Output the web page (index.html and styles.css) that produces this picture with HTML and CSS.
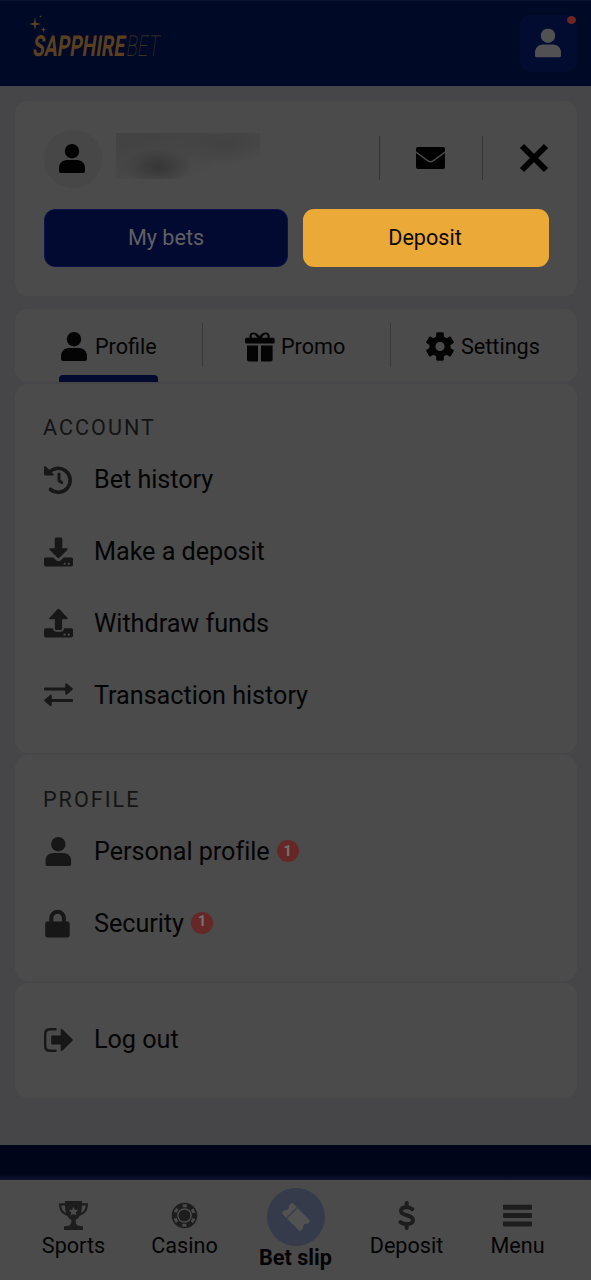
FILE: index.html
```
<!DOCTYPE html>
<html lang="en">
<head>
<meta charset="utf-8">
<title>SapphireBet – Account</title>
<link rel="stylesheet" href="styles.css">
</head>
<body>
<svg class="defs" width="0" height="0">
  <symbol id="user" viewBox="0 0 26 29"><circle cx="13" cy="7.2" r="7.2"/><path d="M8 16h10c4.800 0 8 3.500 8 8.500v2.200c0 1.400-.9 2.300-2.300 2.300H2.300C.9 29 0 28.100 0 26.700v-2.200C0 19.500 3.200 16 8 16z"/></symbol>
  <symbol id="tray" viewBox="0 0 29 10"><path fill-rule="evenodd" d="M1.800 0h7.200l3.400 3.200q2.100 1.600 4.200 0L20 0h7.200Q29 0 29 1.800v5.700Q29 9.300 27.200 9.300H1.800Q0 9.300 0 7.500V1.800Q0 0 1.800 0zM20.600 5.400a1.100 1.100 0 1 0 0 2.200a1.100 1.100 0 1 0 0-2.200zM24.800 5.400a1.100 1.100 0 1 0 0 2.200a1.100 1.100 0 1 0 0-2.200z"/></symbol>
</svg>

<header class="header">
  <div class="logo">
    <svg class="logo-stars" width="18" height="18" viewBox="0 0 18 18"><path d="M6 2l1 5.700 5 1.300-5 1.200-1 5-1-5L0 9l5-1.300zM14.500 11.500l.6 2.600 2.400.6-2.400.6-.6 2.600-.6-2.600-2.400-.6 2.400-.6zM11.500.5l1 1-1 1-1-1z"/></svg>
    <svg class="logo-word" width="134" height="30" viewBox="0 0 134 30"><g transform="translate(3 25.600) skewX(-8)"><text class="word-bold" x="0" y="0" textLength="92" lengthAdjust="spacingAndGlyphs">SAPPHIRE</text><text class="word-thin" x="93.500" y="0" textLength="33" lengthAdjust="spacingAndGlyphs">BET</text></g></svg>
  </div>
  <div class="account-button">
    <svg width="26" height="30" viewBox="0 0 26 29"><use href="#user"/></svg>
    <span class="alert-dot"></span>
  </div>
</header>

<main class="page">
  <section class="card summary">
    <div class="summary-top">
      <div class="avatar"><svg width="26" height="29"><use href="#user"/></svg></div>
      <div class="masked"></div>
      <div class="mail"><svg width="29" height="22" viewBox="0 0 29 22"><path d="M2 0h25q2 0 2 2v2.200L16.700 13.200q-2.200 1.500-4.400 0L0 4.200V2Q0 0 2 0zM0 6l11.500 8.400q3 2 6 0L29 6v14q0 2-2 2H2q-2 0-2-2z"/></svg></div>
      <div class="close"><svg width="30" height="30" viewBox="0 0 30 30"><path d="M3 3l24 24M27 3L3 27"/></svg></div>
    </div>
    <div class="summary-actions">
      <div class="button button-bets">My bets</div>
      <div class="button button-deposit">Deposit</div>
    </div>
  </section>

  <nav class="card tabs">
    <div class="tab tab-profile"><svg width="26" height="29"><use href="#user"/></svg><span>Profile</span></div>
    <div class="tab tab-promo"><svg width="30" height="30" viewBox="0 0 30 30"><path fill-rule="evenodd" d="M2 5.800h2.600C3.800 2.400 5.600.4 8.300.4c2.800 0 4.600 1.500 6.200 3.600C16.200 1.900 18 .4 20.800.4c2.700 0 4.500 2 3.700 5.400H28q1.700 0 1.700 1.600v2.500q0 1.600-1.700 1.600H1.700Q0 11.500 0 9.900V7.400Q0 5.800 2 5.800zM7 5.800h5.500C11 3.500 9.800 2.300 8.300 2.300 6.700 2.300 6.400 4 7 5.800zM16.800 5.800h5.400c.6-1.800.2-3.500-1.400-3.500-1.500 0-2.500 1.200-4 3.500zM2 13.400h11V29.500H4q-2 0-2-2zM16 13.400h11.600v14.100q0 2-2 2H16z"/></svg><span>Promo</span></div>
    <div class="tab tab-settings"><svg width="28" height="29" viewBox="-14 -14.500 28 29"><g class="teeth"><rect x="-3.800" y="-14.200" width="7.600" height="28.400" rx="1.400"/><rect x="-3.800" y="-14.200" width="7.600" height="28.400" rx="1.400" transform="rotate(60)"/><rect x="-3.800" y="-14.200" width="7.600" height="28.400" rx="1.400" transform="rotate(120)"/></g><circle r="10.600"/><circle class="gear-hole" r="4.600"/></svg><span>Settings</span></div>
  </nav>

  <section class="card account">
    <h2>Account</h2>
    <div class="row"><svg class="line" width="30" height="30" viewBox="0 0 29 30"><path class="history-ring" d="M4.500 8.200A12 12 0 1 1 6.500 24.500"/><path class="solid" d="M0 2q0-1.800 1.500-.7L9.500 9q1 1.400-.7 1.500H1.600Q0 10.500 0 8.900z"/><path class="history-hand" d="M15 9v6.500l2.700 2"/></svg><span>Bet history</span></div>
    <div class="row"><svg width="29" height="30" viewBox="0 0 29 30"><path d="M12.200.5h4.600q1.500 0 1.500 1.500v9.200h4.500q1.800.2.600 1.600l-7.900 7.900q-1 .9-2 0l-7.900-7.900q-1.200-1.400.6-1.600h4.500V2q0-1.500 1.500-1.500z"/><svg y="20.300" width="29" height="10"><use href="#tray"/></svg></svg><span>Make a deposit</span></div>
    <div class="row"><svg width="29" height="30" viewBox="0 0 29 30"><path d="M12.400 22q-1.500 0-1.500-1.500v-9.300H6.300q-1.900-.1-.7-1.500l7.900-8.500q1-1 2 0l7.900 8.500q1.200 1.400-.7 1.500h-4.600v9.300q0 1.500-1.500 1.500z"/><path fill-rule="evenodd" d="M1.800 20.300H9q.3 3.500 3.400 3.500h4.200q3.100 0 3.400-3.500h7.200q1.800 0 1.800 1.800v5.700q0 1.800-1.800 1.800H1.800Q0 29.600 0 27.800v-5.700q0-1.800 1.800-1.800zM20.600 25.600a1.100 1.100 0 1 0 0 2.200a1.100 1.100 0 1 0 0-2.200zM24.800 25.600a1.100 1.100 0 1 0 0 2.200a1.100 1.100 0 1 0 0-2.200z"/></svg><span>Withdraw funds</span></div>
    <div class="row"><svg width="29" height="24" viewBox="0 0 29 24"><path d="M1 4.500h20.200V1.700q.2-2.400 2-.9l5 4.200q1.300 1 0 2l-5 4.300q-1.800 1.400-2-.9V7.500H1q-1 0-1-1v-1q0-1 1-1zM28 15.900H7.800v-2.800q-.2-2.400-2-.9l-5 4.200q-1.300 1 0 2l5 4.300q1.800 1.400 2-.9v-2.900H28q1 0 1-1v-1q0-1-1-1z"/></svg><span>Transaction history</span></div>
  </section>

  <section class="card profile">
    <h2>Profile</h2>
    <div class="row"><svg width="29" height="29" viewBox="-1.300 0 29 29"><use href="#user" width="26" height="29"/></svg><span>Personal profile</span><b class="count">1</b></div>
    <div class="row"><svg width="29" height="29" viewBox="0 0 29 29"><path fill-rule="evenodd" d="M5.300 12.500V9a8.300 8.300 0 0 1 16.600 0v3.500h1.500q2.300 0 2.300 2.300v11.400q0 2.300-2.300 2.300H3.500q-2.300 0-2.300-2.300V14.800q0-2.300 2.300-2.300zM9.300 12.500h8.600V9a4.300 4.300 0 0 0-8.600 0z"/></svg><span>Security</span><b class="count raised">1</b></div>
  </section>

  <section class="card logout">
    <div class="row"><svg width="29" height="24" viewBox="0 0 29 24"><path class="bracket" d="M11.500 1.200H6Q1.200 1.200 1.200 6v12Q1.200 22.800 6 22.800h5.500"/><path d="M8.500 7.500h8.200V1.800q.2-1.600 1.600-.6l10 9.700q1 1.100 0 2.200l-10 9.700q-1.400 1-1.600-.6v-5.700H8.500q-1.300 0-1.300-1.300V8.800q0-1.300 1.300-1.300z"/></svg><span>Log out</span></div>
  </section>
</main>

<div class="footer-band"></div>
<nav class="bottom-nav">
  <div class="nav-item"><svg width="29" height="29" viewBox="0 0 29 29"><path fill-rule="evenodd" d="M6 0h17v2.300h6C29 9.500 26.200 13 20.800 14.700 19.500 17 18 18.300 16.700 18.800c-.3 3 .4 5.700 3.800 6.200h2q1.500 0 1.500 1.300V29H5v-2.700Q5 25 6.500 25h2c3.400-.5 4.100-3.200 3.800-6.200C11 18.300 9.500 17 8.200 14.700 2.800 13 0 9.500 0 2.300h6zM2.200 4.500c.4 3.800 1.900 6.200 4.800 7.600C6.300 9.800 6 7.200 6 4.500zM26.800 4.500H23c0 2.700-.3 5.300-1 7.600 2.900-1.400 4.400-3.800 4.800-7.600zM14.500 5.700l-1.400 3-3.300.4 2.400 2.300-.6 3.200 2.900-1.500 2.900 1.500-.6-3.200 2.400-2.300-3.300-.4z"/></svg><span>Sports</span></div>
  <div class="nav-item"><svg width="29" height="29" viewBox="-14.500 -14.500 29 29"><circle r="12.800"/><circle class="chip-dashes" r="9.800"/><circle class="chip-ring" r="6.600"/></svg><span>Casino</span></div>
  <div class="nav-item nav-slip"><i class="slip-circle"><svg width="30" height="30" viewBox="-15 -15 30 30"><g transform="rotate(45)"><path d="M-13-6.500q0-1 1-1h5.500v15H-12q-1 0-1-1v-3.300a3.300 3.300 0 0 0 0-6zM-5-7.500H12q1 0 1 1v3.300a3.300 3.300 0 0 0 0 6v3.700q0 1-1 1H-5z"/><path class="ticket-cut" d="M-5.700-7.500v15"/></g></svg></i><span>Bet slip</span></div>
  <div class="nav-item"><svg width="29" height="29" viewBox="0 0 29 29"><path class="dollar" d="M20.300 8.200C18.800 6.800 17 6.200 14.500 6.200c-3.400 0-5.500 1.500-5.500 3.900 0 5.400 12 3 12 8.800 0 2.700-2.500 4.200-6 4.200-2.700 0-4.900-.7-6.500-2M14.700 2v4M14.700 23v4"/></svg><span>Deposit</span></div>
  <div class="nav-item"><svg width="29" height="29" viewBox="0 0 29 29"><path d="M1 3.800h27q1 0 1 1v3q0 1-1 1H1q-1 0-1-1v-3q0-1 1-1zM1 12.100h27q1 0 1 1v3q0 1-1 1H1q-1 0-1-1v-3q0-1 1-1zM1 20.400h27q1 0 1 1v3q0 1-1 1H1q-1 0-1-1v-3q0-1 1-1z"/></svg><span>Menu</span></div>
</nav>
</body>
</html>
```

FILE: styles.css
```
* { box-sizing: border-box; }
body {
  margin: 0;
  width: 591px;
  height: 1280px;
  overflow: hidden;
  display: flex;
  flex-direction: column;
  background: #464648;
  color: #040404;
  font-family: Roboto, sans-serif;
  font-size: 21.6px;
}
svg { display: block; flex: none; fill: currentColor; }
.defs { position: absolute; }

.header {
  height: 86px;
  flex: none;
  display: flex;
  justify-content: space-between;
  background: #000926;
  border-top: 1px solid #0b1433;
  padding: 14px 14px 0 29px;
}
.logo { color: #5a4020; }
.logo-word { margin-top: -3px; overflow: visible; }
.word-bold { font: 700 29px "Roboto", sans-serif; }
.word-thin { font: 100 29px "Roboto", sans-serif; fill: #4b3928; }
.account-button {
  position: relative;
  width: 57px;
  height: 57px;
  display: grid;
  place-items: center;
  border-radius: 10px;
  background: #020b30;
  color: #515154;
}
.account-button svg { margin: 0 2px 1px 0; }
.alert-dot {
  position: absolute;
  top: 1px;
  right: 1px;
  width: 9px;
  height: 8px;
  border-radius: 50%;
  background: #702622;
}

.page { height: 1059px; flex: none; padding: 15px 14px 0 15px; }
.card { background: #4b4b4b; border-radius: 13px; }
.summary { height: 195px; padding: 29px 28px 0 29px; }
.summary-top { display: flex; height: 58px; }
.avatar {
  width: 58px;
  height: 58px;
  display: grid;
  place-items: center;
  border-radius: 50%;
  background: #474747;
  color: #000;
}
.avatar svg { margin: 0 2px 2px 0; }
.masked {
  width: 144px;
  height: 46px;
  margin: 3px 119px 0 14px;
  background:
    radial-gradient(ellipse 34px 18px at 42px 34px, #363636, transparent),
    radial-gradient(ellipse 50px 20px at 110px 10px, #424242, transparent),
    linear-gradient(165deg, #434343 15%, #474747 50%, #4b4b4b 75%);
}
.mail, .close {
  height: 44px;
  margin-top: 6px;
  border-left: 1px solid #353535;
  display: flex;
  align-items: center;
  color: #000;
}
.mail { width: 103px; padding-left: 36px; }
.close { padding-left: 36px; }
.close svg { stroke: #000; stroke-width: 6; }
.summary-actions { display: flex; gap: 15px; margin-top: 21px; }
.button {
  height: 58px;
  border-radius: 11px;
  text-align: center;
  line-height: 56px;
}
.button-bets { width: 244px; background: #020a31; border: 1px solid #091347; color: #606064; line-height: 55px; }
.button-deposit { width: 246px; background: #eba937; color: #0c0904; padding-right: 2px; line-height: 57px; }

.tabs { height: 73px; margin-top: 13px; display: flex; padding-top: 14px; }
.tab { height: 44px; display: flex; align-items: center; gap: 6px; line-height: 44px; }
.tab svg, .tab span { margin-top: 3px; }
.tab-profile { position: relative; width: 187px; padding-left: 46px; gap: 8px; }
.tab-profile::after {
  content: "";
  position: absolute;
  left: 44px;
  top: 52px;
  width: 99px;
  height: 7px;
  border-radius: 4px 4px 0 0;
  background: #030a30;
}
.tab-promo { width: 188px; border-left: 1px solid #383838; padding-left: 42px; }
.tab-settings { border-left: 1px solid #383838; padding-left: 35px; gap: 7px; }
.gear-hole { fill: #4b4b4b; }

.account { height: 369px; margin-top: 2px; padding: 29px 29px 0; }
.profile { height: 226px; margin-top: 2px; padding: 30px 29px 0; }
.logout { height: 115px; margin-top: 2px; padding: 21px 29px 0; }
h2 {
  margin: 0 0 2px -1px;
  height: 29px;
  line-height: 30px;
  font-size: 21.6px;
  font-weight: 400;
  letter-spacing: 2px;
  text-transform: uppercase;
  color: #141414;
}
.row { height: 71.8px; display: flex; align-items: center; font-size: 25.2px; letter-spacing: -0.03px; }
.row svg { width: 29px; margin-right: 21px; color: #171717; }
.history-ring { fill: none; stroke: currentColor; stroke-width: 3.600; stroke-linecap: round; }
.history-hand { fill: none; stroke: currentColor; stroke-width: 3; stroke-linecap: round; stroke-linejoin: round; }
.bracket { fill: none; stroke: currentColor; stroke-width: 2.400; stroke-linecap: round; }
.count {
  width: 22px;
  height: 22px;
  margin: -1px 0 0 7px;
  border-radius: 50%;
  background: #662727;
  color: #77706f;
  font-size: 15px;
  line-height: 22px;
  text-align: center;
}
.raised { line-height: 19px; }

.footer-band {
  height: 35px;
  flex: none;
  background: linear-gradient(#000519 82%, #10122f 100%);
}
.bottom-nav {
  height: 100px;
  display: flex;
  padding: 0 18px;
  background: #4b4b4b;
}
.nav-item {
  width: 111px;
  display: flex;
  flex-direction: column;
  align-items: center;
  padding-top: 21px;
  line-height: 32px;
}
.nav-item svg { color: #1d1d1d; }
.chip-dashes { fill: none; stroke: #4b4b4b; stroke-width: 3; stroke-dasharray: 4.200 6.063; stroke-dashoffset: -3.032; }
.chip-ring { fill: none; stroke: #4b4b4b; stroke-width: 1.500; }
.dollar { fill: none; stroke: currentColor; stroke-width: 4; stroke-linecap: round; }
.nav-slip { padding-top: 8px; font-weight: 700; line-height: 23px; }
.slip-circle {
  width: 58px;
  height: 58px;
  border-radius: 50%;
  display: grid;
  place-items: center;
  background: #363b4b;
}
.nav-item .slip-circle svg { color: #525252; }
.ticket-cut { stroke: #454650; stroke-width: 1; stroke-dasharray: 2 2; }
```
